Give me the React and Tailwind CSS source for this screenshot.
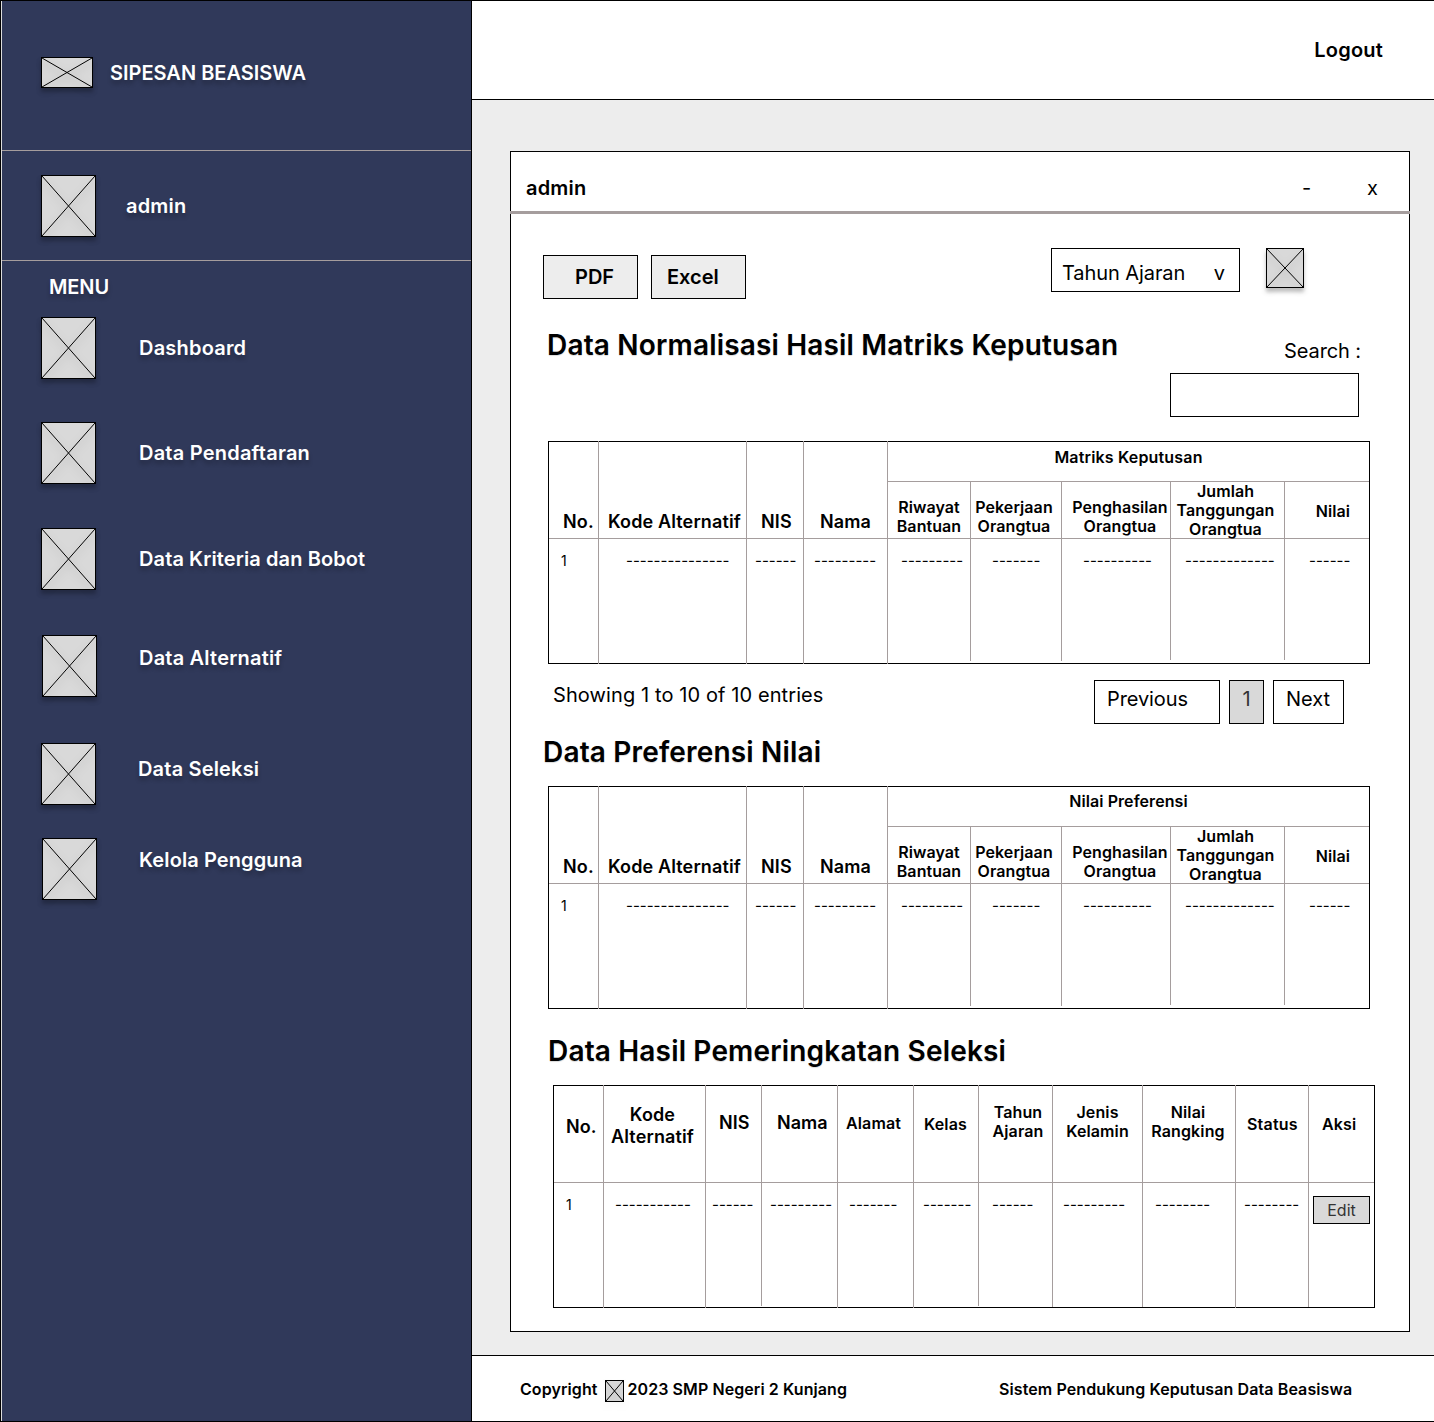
import React from "react";

const Ph = ({ className = "" }) => (
  <div className={`shrink-0 border border-black bg-[#d9d9d9] shadow-[0_4px_4px_rgba(0,0,0,0.25)] ${className}`}>
    <svg className="block w-full h-full drop-shadow-[0_4px_4px_rgba(0,0,0,0.25)]" viewBox="0 0 100 100" preserveAspectRatio="none">
      <path d="M0 0L100 100M100 0L0 100" stroke="#000" strokeWidth="1" vectorEffect="non-scaling-stroke" fill="none" />
    </svg>
  </div>
);

const MenuItem = ({ label, wrap, text }) => (
  <div className={`flex items-start ${wrap}`}>
    <Ph className="w-[55px] h-[62px]" />
    <span className={`text-[20px] leading-[24px] font-semibold text-white [text-shadow:0_4px_4px_rgba(0,0,0,0.25)] ${text}`}>{label}</span>
  </div>
);

const H = ({ className = "", children }) => (
  <div className={`-mt-px text-[18px] leading-[22px] tracking-[0.13px] font-semibold border-r border-[#a59d9d] ${className}`}>{children}</div>
);
const S = ({ className = "", children }) => (
  <div className={`flex flex-col justify-center text-center text-[16px] leading-[19px] tracking-[0.08px] font-semibold border-r border-b border-[#a59d9d] ${className}`}>{children}</div>
);
const D = ({ className = "", n = 0, children }) => (
  <div className={`text-[15px] leading-[17px] pt-[13px] border-r border-[#a59d9d] ${className}`}>{children}{"-".repeat(n)}</div>
);

const SubHeaders = () => (
  <>
    <S className="pt-[14px]">Riwayat<br />Bantuan</S>
    <S className="pt-[14px] pr-[4px]">Pekerjaan<br />Orangtua</S>
    <S className="pt-[14px] pl-[8px] whitespace-nowrap">Penghasilan<br />Orangtua</S>
    <S className="pr-[4px]">Jumlah<br />Tanggungan<br />Orangtua</S>
    <S className="!border-r-0 pl-[12px] pt-[2px]">Nilai</S>
  </>
);

const BodyRow = () => (
  <>
    <D className="pl-[12px] -mb-px !text-[14px]">1</D>
    <D className="pl-[27px] -mb-px" n={15} />
    <D className="pl-[8px] -mb-px" n={6} />
    <D className="pl-[10px] -mb-px" n={9} />
    <D className="pl-[13px] mb-[2px]" n={9} />
    <D className="pl-[21px] mb-[2px]" n={7} />
    <D className="pl-[21px] mb-[3px]" n={10} />
    <D className="pl-[14px] mb-[3px]" n={13} />
    <D className="pl-[24px] !border-r-0" n={6} />
  </>
);

const MatrixTable = ({ title, groupClass }) => (
  <div className="ml-[37px] w-[822px] h-[223px] border border-black grid grid-cols-[50px_148px_57px_84px_83px_91px_109px_114px_1fr] grid-rows-[40px_57px_1fr]">
    <H className="row-span-2 border-b flex items-end pb-[5px] pl-[14px]">No.</H>
    <H className="row-span-2 border-b flex items-end pb-[5px] pl-[9px]">Kode Alternatif</H>
    <H className="row-span-2 border-b flex items-end pb-[5px] pl-[14px]">NIS</H>
    <H className="row-span-2 border-b flex items-end pb-[5px] pl-[16px]">Nama</H>
    <div className={`col-span-5 border-b border-[#a59d9d] text-center text-[16px] leading-[19px] font-semibold ${groupClass}`}>{title}</div>
    <SubHeaders />
    <BodyRow />
  </div>
);

const T = ({ className = "", children }) => (
  <div className={`-mt-px font-semibold border-r border-b border-[#a59d9d] ${className}`}>{children}</div>
);
const Rank = () => (
  <div className="ml-[42px] w-[822px] h-[223px] border border-black grid grid-cols-[50px_102px_56px_76px_76px_65px_74px_90px_93px_73px_1fr] grid-rows-[97px_1fr]">
    <T className="text-[18px] leading-[22px] pl-[12px] pt-[31px]">No.</T>
    <T className="text-[18px] leading-[22px] tracking-[0.13px] text-center pt-[19px] pr-[4px]">Kode<br />Alternatif</T>
    <T className="text-[18px] leading-[22px] pl-[13px] pt-[27px]">NIS</T>
    <T className="text-[18px] leading-[22px] pl-[15px] pt-[27px]">Nama</T>
    <T className="text-[16px] leading-[19px] tracking-[0.12px] pl-[8px] pt-[29px]">Alamat</T>
    <T className="text-[16px] leading-[19px] tracking-[0.12px] pl-[10px] pt-[30px]">Kelas</T>
    <T className="text-[16px] leading-[19px] tracking-[0.12px] text-center pt-[18px] pl-[5px]">Tahun<br />Ajaran</T>
    <T className="text-[16px] leading-[19px] tracking-[0.12px] text-center pt-[18px]">Jenis<br />Kelamin</T>
    <T className="text-[16px] leading-[19px] tracking-[0.12px] text-center pt-[18px] pr-[2px]">Nilai<br />Rangking</T>
    <T className="text-[16px] leading-[19px] tracking-[0.2px] pl-[11px] pt-[30px]">Status</T>
    <T className="!border-r-0 text-[16px] leading-[19px] tracking-[0.12px] pl-[13px] pt-[30px]">Aksi</T>
    <D className="pl-[12px] -mb-px !text-[14px]">1</D>
    <D className="pl-[11px] -mb-px" n={11} />
    <D className="pl-[6px] mb-[1px]" n={6} />
    <D className="pl-[8px] -mb-px" n={9} />
    <D className="pl-[11px] -mb-px" n={7} />
    <D className="pl-[9px] mb-[1px]" n={7} />
    <D className="pl-[13px]" n={6} />
    <D className="pl-[10px]" n={9} />
    <D className="pl-[12px] -mb-px" n={8} />
    <D className="pl-[8px]" n={8} />
    <div className="pl-[4px] pt-[13px]">
      <div className="w-[57px] h-[28px] border border-black bg-[#d9d9d9] text-[16px] leading-[26px] text-center text-[#333333]">Edit</div>
    </div>
  </div>
);

const titleCls = "text-[28px] leading-[34px] tracking-[0.17px] font-semibold [text-shadow:0_1px_1px_rgba(0,0,0,0.15)]";

export default function App() {
  return (
    <div className="w-[1434px] h-[1422px] flex overflow-hidden bg-white text-black font-['Inter',sans-serif]">
      <aside className="w-[471px] shrink-0 h-full bg-[#30395a] border-t border-b border-l border-black">
        <div className="h-full border-l border-[#dddddd]">
          <div className="h-[150px] border-b border-[#a59d9d] flex items-start pl-[39px] pt-[56px]">
            <Ph className="w-[52px] h-[31px]" />
            <span className="ml-[17px] mt-[4px] text-[20px] leading-[24px] font-semibold text-white [text-shadow:0_4px_4px_rgba(0,0,0,0.25)]">SIPESAN BEASISWA</span>
          </div>
          <div className="h-[110px] border-b border-[#a59d9d] flex items-start pl-[39px] pt-[24px]">
            <Ph className="w-[55px] h-[62px]" />
            <span className="ml-[30px] mt-[19px] text-[20px] leading-[24px] tracking-[0.2px] font-semibold text-white [text-shadow:0_4px_4px_rgba(0,0,0,0.25)]">admin</span>
          </div>
          <div className="pl-[47px] pt-[14px] text-[20px] leading-[24px] tracking-[-0.1px] font-semibold text-white [text-shadow:0_4px_4px_rgba(0,0,0,0.25)]">MENU</div>
          <div className="pl-[39px] flex flex-col">
            <MenuItem label="Dashboard" wrap="mt-[18px]" text="ml-[43px] mt-[19px] tracking-[0.2px]" />
            <MenuItem label="Data Pendaftaran" wrap="mt-[43px]" text="ml-[43px] mt-[19px] tracking-[0.22px]" />
            <MenuItem label="Data Kriteria dan Bobot" wrap="mt-[44px]" text="ml-[43px] mt-[19px] tracking-[0.1px]" />
            <MenuItem label="Data Alternatif" wrap="mt-[45px] ml-[1px]" text="ml-[42px] mt-[11px] tracking-[0.2px]" />
            <MenuItem label="Data Seleksi" wrap="mt-[46px]" text="ml-[42px] mt-[14px] tracking-[0.18px]" />
            <MenuItem label="Kelola Pengguna" wrap="mt-[33px] ml-[1px]" text="ml-[42px] mt-[10px] tracking-[0.1px]" />
          </div>
        </div>
      </aside>

      <main className="flex-1 flex flex-col h-full border-l border-black">
        <header className="h-[100px] shrink-0 border-t border-b border-black flex justify-end items-center pr-[51px]">
          <span className="text-[20px] leading-[24px] tracking-[0.2px] font-semibold">Logout</span>
        </header>
        <div className="flex-1 bg-[#ededed] pl-[38px] pt-[51px]">
          <section className="w-[900px] h-[1181px] bg-white border border-black">
            <div className="h-[62px] -mx-px border-b-[3px] border-[#a59d9d] flex items-start pl-[16px] pt-[24px]">
              <span className="text-[20px] leading-[24px] tracking-[0.2px] font-semibold">admin</span>
              <span className="ml-auto mr-[56px] text-[20px] leading-[24px]">-</span>
              <span className="mr-[32px] text-[20px] leading-[24px]">x</span>
            </div>
            <div className="flex items-start pt-[34px] pl-[32px]">
              <div className="mt-[7px] w-[95px] h-[44px] border border-black bg-[#ededed] text-[20px] leading-[42px] font-semibold pl-[31px]">PDF</div>
              <div className="mt-[7px] ml-[13px] w-[95px] h-[44px] border border-black bg-[#ededed] text-[20px] leading-[42px] font-semibold pl-[15px]">Excel</div>
              <div className="ml-[305px] w-[189px] h-[44px] border border-black text-[20px] leading-[48px] tracking-[-0.08px] pl-[10px] flex justify-between pr-[14px]">
                <span>Tahun Ajaran</span><span>v</span>
              </div>
              <Ph className="ml-[26px] w-[38px] h-[40px]" />
            </div>
            <div className="flex items-start">
              <div className={`ml-[36px] mt-[29px] ${titleCls}`}>Data Normalisasi Hasil Matriks Keputusan</div>
              <div className="ml-auto mr-[48px] mt-[40px] flex flex-col items-end">
                <span className="text-[20px] leading-[24px] tracking-[-0.1px]">Search :</span>
                <div className="mt-[10px] mr-[2px] w-[189px] h-[44px] border border-black"></div>
              </div>
            </div>
            <div className="mt-[24px]">
              <MatrixTable title="Matriks Keputusan" groupClass="pt-[6px] tracking-[0.17px]" />
            </div>
            <div className="mt-[16px] flex items-start pl-[42px]">
              <span className="mt-[3px] text-[20px] leading-[24px] tracking-[0.1px]">Showing 1 to 10 of 10 entries</span>
              <div className="ml-auto mr-[65px] flex gap-[9px] text-[20px] leading-[36px]">
                <div className="w-[126px] h-[44px] border border-black pl-[12px] tracking-[-0.1px]">Previous</div>
                <div className="w-[35px] h-[44px] border border-black bg-[#d9d9d9] text-center text-[#333333]">1</div>
                <div className="w-[71px] h-[44px] border border-black pl-[12px]">Next</div>
              </div>
            </div>
            <div className={`mt-[11px] ml-[32px] ${titleCls}`}>Data Preferensi Nilai</div>
            <div className="mt-[17px]">
              <MatrixTable title="Nilai Preferensi" groupClass="pt-[5px] tracking-[0.07px]" />
            </div>
            <div className={`mt-[25px] ml-[37px] ${titleCls}`}>Data Hasil Pemeringkatan Seleksi</div>
            <div className="mt-[17px]">
              <Rank />
            </div>
          </section>
        </div>
        <footer className="h-[67px] shrink-0 border-t border-b border-black flex items-start pt-[24px] pl-[48px] text-[16px] leading-[19px] font-semibold">
          <span className="tracking-[0.08px]">Copyright</span>
          <Ph className="ml-[7px] w-[19px] h-[22px] !shadow-none" />
          <span className="ml-[4px] tracking-[0.08px]">2023 SMP Negeri 2 Kunjang</span>
          <span className="ml-[152px] tracking-[0.1px]">Sistem Pendukung Keputusan Data Beasiswa</span>
        </footer>
      </main>
    </div>
  );
}
